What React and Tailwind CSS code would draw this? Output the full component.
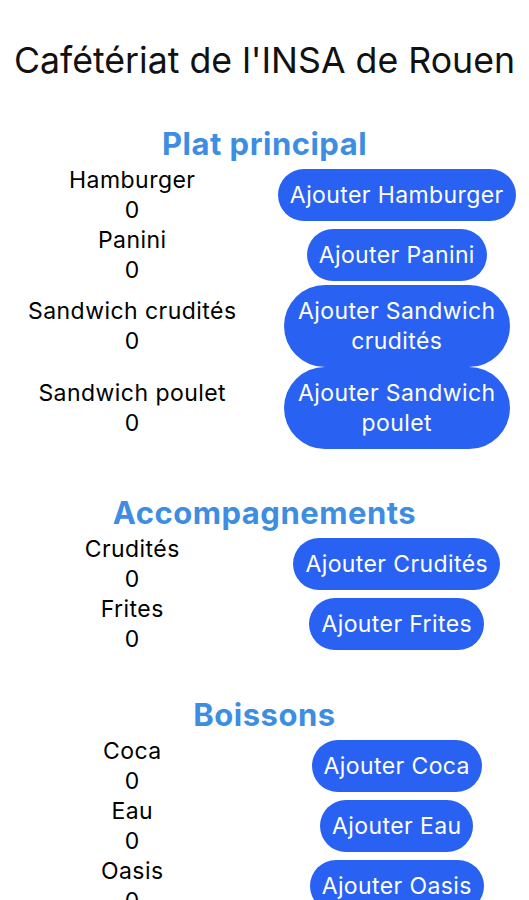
import React from "react";

const sections = [
  {
    title: "Plat principal",
    mt: "mt-[41px]",
    items: [
      { name: "Hamburger" },
      { name: "Panini" },
      { name: "Sandwich crudités", wrap: true },
      { name: "Sandwich poulet", wrap: true },
    ],
  },
  {
    title: "Accompagnements",
    mt: "mt-[43px]",
    items: [{ name: "Crudités" }, { name: "Frites" }],
  },
  {
    title: "Boissons",
    mt: "mt-[40px]",
    items: [{ name: "Coca" }, { name: "Eau" }, { name: "Oasis" }],
  },
];

function Row({ item }) {
  return (
    <div className="grid grid-cols-2 items-center">
      <div className="flex flex-col items-center text-center text-[23px] leading-[30px] tracking-[0.45px] text-black">
        <span>{item.name}</span>
        <span>0</span>
      </div>
      <div className="flex justify-center">
        <button
          className={
            item.wrap
              ? "w-[226px] rounded-full bg-[#2962f3] px-[12px] py-[11px] text-center text-[23px] leading-[30px] tracking-[0.4px] text-white"
              : "rounded-full bg-[#2962f3] px-[12px] py-[11px] text-center text-[23px] leading-[30px] tracking-[0.4px] text-white whitespace-nowrap"
          }
        >
          Ajouter {item.name}
        </button>
      </div>
    </div>
  );
}

export default function App() {
  return (
    <div className="min-h-[900px] w-full overflow-hidden bg-white font-['Inter',sans-serif]">
      <h1 className="pt-[38px] text-center text-[35.7px] leading-[44px] font-normal text-[#111]">
        Cafétériat de l'INSA de Rouen
      </h1>
      {sections.map((s) => (
        <section key={s.title} className={s.mt}>
          <h2 className="text-center text-[31px] leading-[42px] font-bold tracking-[0.5px] text-[#3d8ee2]">
            {s.title}
          </h2>
          {s.items.map((it) => (
            <Row key={it.name} item={it} />
          ))}
        </section>
      ))}
    </div>
  );
}
